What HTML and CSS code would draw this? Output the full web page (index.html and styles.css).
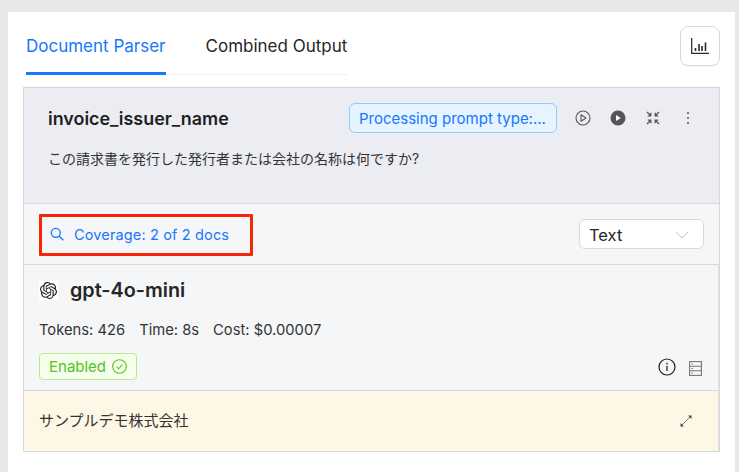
FILE: index.html
```html
<!DOCTYPE html>
<html lang="en">
<head>
<meta charset="utf-8">
<title>Document Parser</title>
<link rel="stylesheet" href="styles.css">
</head>
<body>
<main class="page">
  <div class="top">
    <nav class="tabs">
      <a class="tab active">Document Parser</a>
      <a class="tab">Combined Output</a>
    </nav>
    <button class="chart-btn" aria-label="Metrics">
      <svg width="18" height="16" viewBox="0 0 18 16" fill="none"><path d="M.7 0v15.300H18" stroke="#262626" stroke-width="1.200"/><path d="M4.500 10v3M8 6v7M11 8v5M14.500 4.500v8.500" stroke="#262626" stroke-width="1.600"/></svg>
    </button>
  </div>
  <section class="panel">
    <header class="prompt">
      <div class="prompt-row">
        <h2 class="prompt-name">invoice_issuer_name</h2>
        <span class="status">Processing prompt type:...</span>
        <div class="prompt-icons">
          <svg width="16" height="16" viewBox="0 0 16 16" fill="none"><circle cx="8" cy="8" r="7" stroke="#555" stroke-width="1.100"/><path d="M6 4.800v6.400L11 8z" stroke="#555" stroke-width="1.100" stroke-linejoin="round"/></svg>
          <svg width="16" height="16" viewBox="0 0 16 16"><circle cx="8" cy="8" r="7.500" fill="#555"/><path d="M6 5v6l4.800-3z" fill="#fff"/></svg>
          <svg width="14" height="14" viewBox="0 0 14 14" fill="none" stroke="#555" stroke-width="1.300"><path d="M1 1l3.500 3.500M4.800 1.800v3h-3M13 1L9.500 4.500M9.200 1.800v3h3M1 13l3.500-3.500M4.800 12.200v-3h-3M13 13L9.500 9.500M9.200 12.200v-3h3"/></svg>
          <svg width="4" height="14" viewBox="0 0 4 14" fill="#555"><circle cx="2" cy="2" r="1"/><circle cx="2" cy="7" r="1"/><circle cx="2" cy="12" r="1"/></svg>
        </div>
      </div>
      <p class="prompt-text">この請求書を発行した発行者または会社の名称は何ですか?</p>
    </header>
    <div class="toolbar">
      <a class="coverage">
        <svg width="14" height="14" viewBox="0 0 14 14" fill="none" stroke="#1677ff" stroke-width="1.300"><circle cx="5.800" cy="5.800" r="4.500"/><path d="M9 9l4.300 4.300"/></svg>
        <span>Coverage: 2 of 2 docs</span>
      </a>
      <div class="select">
        <span>Text</span>
        <svg width="14" height="8" viewBox="0 0 14 8" fill="none" stroke="#c4c4c4" stroke-width="1"><path d="M1 1l6 6 6-6"/></svg>
      </div>
    </div>
    <div class="lower">
      <div class="model">
        <div class="model-head">
          <span class="logo"><svg width="17" height="17" viewBox="0 0 24 24" fill="#1a1a1a"><path d="M22.2819 9.8211a5.9847 5.9847 0 0 0-.5157-4.9108 6.0462 6.0462 0 0 0-6.5098-2.9A6.0651 6.0651 0 0 0 4.9807 4.1818a5.9847 5.9847 0 0 0-3.9977 2.9 6.0462 6.0462 0 0 0 .7427 7.0966 5.98 5.98 0 0 0 .511 4.9107 6.051 6.051 0 0 0 6.5146 2.9001A5.9847 5.9847 0 0 0 13.2599 24a6.0557 6.0557 0 0 0 5.7718-4.2058 5.9894 5.9894 0 0 0 3.9977-2.9001 6.0557 6.0557 0 0 0-.7475-7.0729zm-9.022 12.6081a4.4755 4.4755 0 0 1-2.8764-1.0408l.1419-.0804 4.7783-2.7582a.7948.7948 0 0 0 .3927-.6813v-6.7369l2.02 1.1686a.071.071 0 0 1 .038.052v5.5826a4.504 4.504 0 0 1-4.4945 4.4944zm-9.6607-4.1254a4.4708 4.4708 0 0 1-.5346-3.0137l.142.0852 4.783 2.7582a.7712.7712 0 0 0 .7806 0l5.8428-3.3685v2.3324a.0804.0804 0 0 1-.0332.0615L9.74 19.9502a4.4992 4.4992 0 0 1-6.1408-1.6464zM2.3408 7.8956a4.485 4.485 0 0 1 2.3655-1.9728V11.6a.7664.7664 0 0 0 .3879.6765l5.8144 3.3543-2.0201 1.1685a.0757.0757 0 0 1-.071 0l-4.8303-2.7865A4.504 4.504 0 0 1 2.3408 7.872zm16.5963 3.8558L13.1038 8.364 15.1192 7.2a.0757.0757 0 0 1 .071 0l4.8303 2.7913a4.4944 4.4944 0 0 1-.6765 8.1042v-5.6772a.79.79 0 0 0-.407-.667zm2.0107-3.0231l-.142-.0852-4.7735-2.7818a.7759.7759 0 0 0-.7854 0L9.409 9.2297V6.8974a.0662.0662 0 0 1 .0284-.0615l4.8303-2.7866a4.4992 4.4992 0 0 1 6.6802 4.66zM8.3065 12.863l-2.02-1.1638a.0804.0804 0 0 1-.038-.0567V6.0742a4.4992 4.4992 0 0 1 7.3757-3.4537l-.142.0805L8.704 5.459a.7948.7948 0 0 0-.3927.6813zm1.0976-2.3654l2.602-1.4998 2.6069 1.4998v2.9994l-2.5974 1.4997-2.6067-1.4997Z"/></svg></span>
          <h3 class="model-name">gpt-4o-mini</h3>
        </div>
        <div class="meta"><span>Tokens: 426</span><span>Time: 8s</span><span>Cost: $0.00007</span></div>
        <div class="model-foot">
          <span class="enabled">Enabled
            <svg width="15" height="15" viewBox="0 0 15 15" fill="none" stroke="#52c41a" stroke-width="1.100"><circle cx="7.500" cy="7.500" r="6.800"/><path d="M4.500 7.700l2.100 2.100 3.900-4.200"/></svg>
          </span>
          <div class="foot-icons">
            <svg width="18" height="18" viewBox="0 0 18 18" fill="none" stroke="#1a1a1a" stroke-width="1.200"><circle cx="9" cy="9" r="8"/><path d="M9 8v5M9 4.800v1.600"/></svg>
            <svg class="server" width="13" height="15" viewBox="0 0 13 15" fill="none" stroke="#777" stroke-width="1.100"><rect x=".6" y=".6" width="11.800" height="13.800"/><path d="M.6 5.200h11.800M.6 9.800h11.800M2.500 3h1.500M2.500 7.500h1.500M2.500 12h1.500"/></svg>
          </div>
        </div>
      </div>
      <div class="result">
        <span class="result-text">サンプルデモ株式会社</span>
        <svg width="14" height="14" viewBox="0 0 14 14" fill="none"><path d="M3 11l8-8" stroke="#777" stroke-width="1"/><path d="M9 1.500h3.500V5zM1.500 9v3.500H5z" fill="#444"/></svg>
      </div>
    </div>
  </section>
</main>
</body>
</html>
```
FILE: styles.css
```css
* { box-sizing: border-box; }
html, body { height: 100%; }
body {
  margin: 0;
  padding: 12px 4px 0 8px;
  background: #e8e8e8;
  font-family: Inter, "Noto Sans CJK JP", sans-serif;
  color: #1f1f1f;
  overflow: hidden;
}
.page {
  height: 100%;
  background: #fff;
  padding: 14px 15px 0 15px;
}
.top {
  display: flex;
  justify-content: space-between;
  align-items: flex-start;
  padding-left: 3px;
  margin-bottom: 12px;
}
.tabs {
  display: flex;
  gap: 40px;
  height: 49px;
  border-bottom: 1px solid #f0f0f0;
}
.tab {
  height: 49px;
  line-height: 41px;
  font-size: 17px;
  color: #262626;
}
.tab.active {
  color: #1677ff;
  border-bottom: 3px solid #1677ff;
}
.chart-btn {
  width: 40px;
  height: 40px;
  padding: 0;
  display: flex;
  align-items: center;
  justify-content: center;
  background: #fff;
  border: 1px solid #d9d9d9;
  border-radius: 8px;
  box-shadow: 0 1px 0 rgba(0, 0, 0, .03);
}
.panel {
  border: 1px solid #d9d9d9;
  border-top-color: #d4d4d4;
}
.prompt {
  height: 116px;
  padding: 15px 14px 0 24px;
  background: #ecedf2;
  border-bottom: 1px solid #d9d9d9;
}
.prompt-row {
  display: flex;
  align-items: center;
  height: 30px;
}
.prompt-name {
  margin: 0;
  flex: 1;
  font-size: 17.9px;
  font-weight: 600;
  color: #1f1f1f;
}
.status {
  width: 208px;
  height: 30px;
  line-height: 29px;
  padding-left: 9px;
  font-size: 15px;
  color: #1677ff;
  background: #e6f4ff;
  border: 1px solid #91caff;
  border-radius: 6px;
  white-space: nowrap;
}
.prompt-icons {
  display: grid;
  grid-template-columns: repeat(4, 35px);
  justify-items: center;
  align-items: center;
  margin-left: 8px;
}
.prompt-text {
  margin: 15px 0 0;
  font-size: 14px;
  line-height: 22px;
  color: #333;
}
.toolbar {
  height: 61px;
  display: flex;
  align-items: center;
  justify-content: space-between;
  padding: 0 15px;
  background: #f5f6f8;
  border-bottom: 1px solid #d9d9d9;
}
.coverage {
  width: 214px;
  height: 42px;
  margin-top: 1px;
  display: flex;
  align-items: center;
  gap: 10px;
  padding-left: 8px;
  font-size: 14.5px;
  letter-spacing: .15px;
  color: #1677ff;
  border: 3px solid #f5260a;
  border-radius: 1px;
}
.coverage svg {
  margin-top: -1px;
}
.select {
  width: 125px;
  height: 30px;
  display: flex;
  align-items: center;
  justify-content: space-between;
  padding: 1px 14px 0 9px;
  font-size: 16.5px;
  color: #262626;
  background: #fff;
  border: 1px solid #d9d9d9;
  border-radius: 6px;
}
.lower {
  border-right: 1px solid #e0e0e0;
}
.model {
  height: 126px;
  padding: 16px 15px 0;
  background: #f5f6f8;
  border-bottom: 1px solid #d9d9d9;
}
.model-head {
  display: flex;
  align-items: center;
  gap: 12px;
  height: 19px;
}
.logo {
  width: 19px;
  height: 19px;
  display: flex;
  align-items: center;
  justify-content: center;
  background: #fff;
}
.model-name {
  margin: -2px 0 0;
  font-size: 19.8px;
  font-weight: 600;
  color: #262626;
}
.meta {
  display: flex;
  gap: 14px;
  margin-top: 20px;
  height: 20px;
  line-height: 20px;
  font-size: 14.75px;
  color: #333;
}
.model-foot {
  display: flex;
  justify-content: space-between;
  align-items: center;
  margin-top: 13px;
  padding-right: 1px;
}
.enabled {
  width: 98px;
  height: 27px;
  display: flex;
  align-items: center;
  gap: 6px;
  padding-left: 9px;
  font-size: 15px;
  color: #52c41a;
  background: #f6ffed;
  border: 1px solid #b7eb8f;
  border-radius: 4px;
}
.foot-icons {
  display: flex;
  align-items: flex-start;
  gap: 13px;
}
.server {
  margin-top: 3px;
}
.result {
  height: 60px;
  display: flex;
  align-items: center;
  justify-content: space-between;
  padding: 0 25px 0 15px;
  font-size: 15px;
  color: #333;
  background: #fef7e6;
}
.result-text {
  padding-bottom: 3px;
}
```
